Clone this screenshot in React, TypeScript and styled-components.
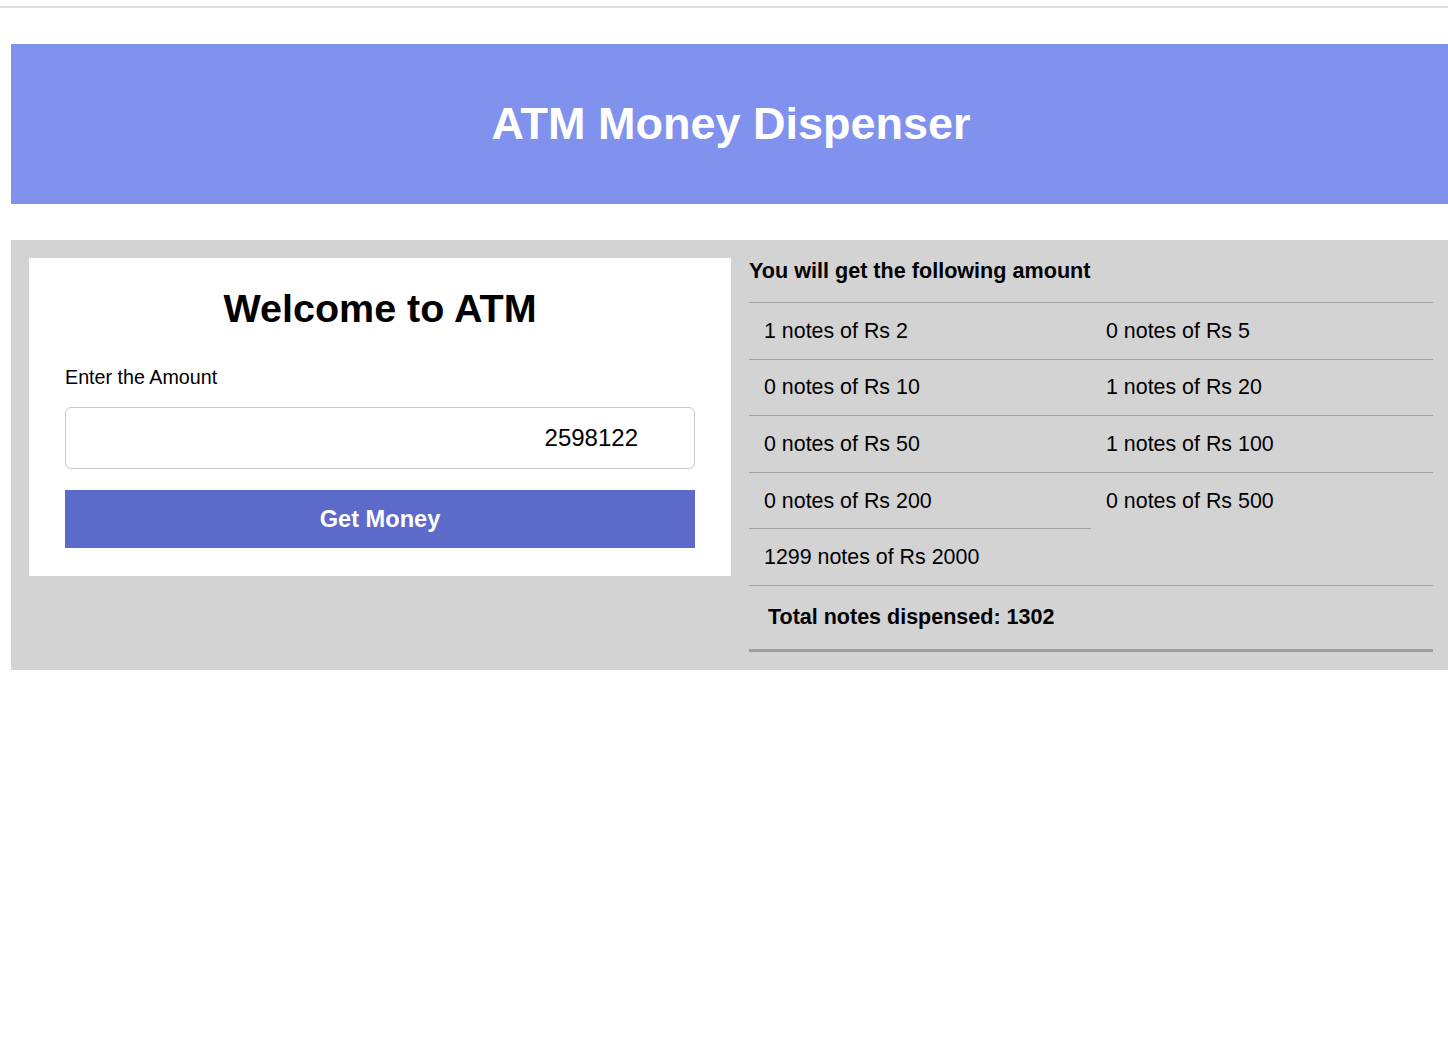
import React from 'react';
import styled, { createGlobalStyle } from 'styled-components';

const AMOUNT = 2598122;
const DENOMINATIONS = [2, 5, 10, 20, 50, 100, 200, 500, 2000];

// greedy split from the biggest note down
const splitAmount = (amount: number) => {
  let left = amount;
  const counts: Record<number, number> = {};
  [...DENOMINATIONS].reverse().forEach((d) => {
    counts[d] = Math.floor(left / d);
    left -= counts[d] * d;
  });
  return DENOMINATIONS.map((d) => ({ value: d, count: counts[d] }));
};

const App: React.FC = () => {
  const notes = splitAmount(AMOUNT);
  const total = notes.reduce((sum, n) => sum + n.count, 0);

  return (
    <>
      <GlobalStyle />
      <TopRule />
      <Page>
        <Banner>
          <BannerTitle>ATM Money Dispenser</BannerTitle>
        </Banner>
        <Panel>
          <Card>
            <Welcome>Welcome to ATM</Welcome>
            <Label htmlFor='amount'>Enter the Amount</Label>
            <AmountInput id='amount' type='text' defaultValue={String(AMOUNT)} />
            <GetButton type='button'>Get Money</GetButton>
          </Card>
          <Result>
            <ResultTitle>You will get the following amount</ResultTitle>
            <NoteGrid>
              {notes.map((n) => (
                <NoteCell key={n.value}>
                  {n.count} notes of Rs {n.value}
                </NoteCell>
              ))}
            </NoteGrid>
            <Total>Total notes dispensed: {total}</Total>
          </Result>
        </Panel>
      </Page>
    </>
  );
};
export default App;

const GlobalStyle = createGlobalStyle`
  html, body {
    margin: 0;
    overflow-x: hidden;
    background: #ffffff;
  }
  body {
    font-family: 'Liberation Sans', Arial, sans-serif;
    color: #000;
    padding-top: 6px;
  }
`;

const TopRule = styled.div`
  height: 2px;
  background: #dcdcdc;
`;

const Page = styled.div`
  width: 1440px;
  margin: 36px 0 0 11px;
`;

const Banner = styled.header`
  height: 160px;
  background: #8092ee;
  display: flex;
  align-items: center;
  justify-content: center;
`;

const BannerTitle = styled.h1`
  margin: 0;
  color: #ffffff;
  font-size: 45px;
  font-weight: bold;
`;

const Panel = styled.main`
  margin-top: 36px;
  background: #d3d3d3;
  padding: 18px;
  display: grid;
  grid-template-columns: 702px 684px;
  column-gap: 18px;
  align-items: start;
`;

const Card = styled.section`
  background: #ffffff;
  padding: 28px 36px;
  display: flex;
  flex-direction: column;
`;

const Welcome = styled.h2`
  margin: 0;
  text-align: center;
  font-size: 39.5px;
  line-height: 45px;
  font-weight: bold;
`;

const Label = styled.label`
  margin-top: 35px;
  font-size: 19.7px;
  line-height: 22px;
`;

const AmountInput = styled.input`
  margin-top: 19px;
  height: 62px;
  box-sizing: border-box;
  border: 1px solid #c8c8c8;
  border-radius: 6px;
  padding: 0 56px 0 12px;
  font-family: inherit;
  font-size: 24px;
  text-align: right;
  color: #000;
  outline: none;
`;

const GetButton = styled.button`
  margin-top: 21px;
  height: 58px;
  border: none;
  background: #5c6bc9;
  color: #ffffff;
  font-family: inherit;
  font-size: 23.6px;
  font-weight: bold;
  cursor: pointer;
`;

const Result = styled.section`
  display: flex;
  flex-direction: column;
`;

const ResultTitle = styled.h4`
  margin: 0 0 18px;
  font-size: 21.6px;
  line-height: 26px;
  font-weight: bold;
`;

const NoteGrid = styled.div`
  display: grid;
  grid-template-columns: 1fr 1fr;
`;

const NoteCell = styled.div`
  border-top: 1px solid #a4a4a4;
  padding: 15.8px 15px 15.2px;
  font-size: 21.4px;
  line-height: 24.6px;
`;

const Total = styled.div`
  border-top: 1px solid #a4a4a4;
  border-bottom: 3px solid #9e9e9e;
  padding: 19.5px 19px;
  font-size: 21.5px;
  line-height: 24px;
  font-weight: bold;
`;
